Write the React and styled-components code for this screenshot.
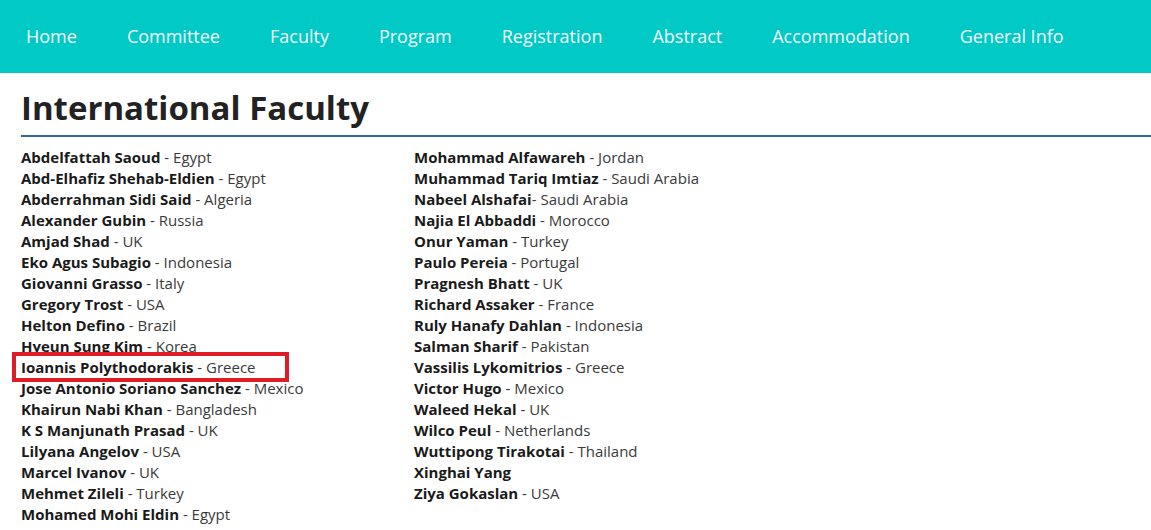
import React from "react";
import styled, { createGlobalStyle } from "styled-components";

const GlobalStyle = createGlobalStyle`
body {
  margin:0;
  background:#fff;
  font-family:"Open Sans", "Liberation Sans", sans-serif;
}
`;

const NavBar = styled.nav`
display:flex;
align-items:center;
height:73px;
background-color:#00c9c6;
padding-left:1px;
`;

const NavLink = styled.a`
padding:0 25px;
font-size:18px;
color:#f4fbfb;
text-decoration:none;
line-height:73px;
`;

const Main = styled.main`
padding:0 0 0 21px;
`;

const Title = styled.h1`
margin:0;
padding-top:15px;
padding-bottom:7px;
font-size:33px;
font-weight:700;
color:#222;
line-height:40px;
border-bottom:2px solid #336699;
`;

const Columns = styled.div`
display:grid;
grid-template-columns:393px 1fr;
padding-top:10px;
`;

const List = styled.ul`
list-style:none;
margin:0;
padding:0;
`;

const Item = styled.li`
position:relative;
font-size:15px;
line-height:21px;
color:#3a3a3a;
white-space:nowrap;
`;

const Name = styled.b`
font-weight:700;
color:#1a1a1a;
`;

// red annotation box drawn over the highlighted row
const Highlight = styled.span`
position:absolute;
left:-9px;
top:-5px;
width:277px;
height:30px;
border:4px solid #dd1c25;
box-sizing:border-box;
pointer-events:none;
`;

const navItems = ["Home", "Committee", "Faculty", "Program", "Registration", "Abstract", "Accommodation", "General Info"];

const left = [
  ["Abdelfattah Saoud", " - Egypt"],
  ["Abd-Elhafiz Shehab-Eldien", " - Egypt"],
  ["Abderrahman Sidi Said", " - Algeria"],
  ["Alexander Gubin", " - Russia"],
  ["Amjad Shad", " - UK"],
  ["Eko Agus Subagio", " - Indonesia"],
  ["Giovanni Grasso", " - Italy"],
  ["Gregory Trost", " - USA"],
  ["Helton Defino", " - Brazil"],
  ["Hyeun Sung Kim", " - Korea"],
  ["Ioannis Polythodorakis", " - Greece", true],
  ["Jose Antonio Soriano Sanchez", " - Mexico"],
  ["Khairun Nabi Khan", " - Bangladesh"],
  ["K S Manjunath Prasad", " - UK"],
  ["Lilyana Angelov", " - USA"],
  ["Marcel Ivanov", " - UK"],
  ["Mehmet Zileli", " - Turkey"],
  ["Mohamed Mohi Eldin", " - Egypt"],
];

const right = [
  ["Mohammad Alfawareh", " - Jordan"],
  ["Muhammad Tariq Imtiaz", " - Saudi Arabia"],
  ["Nabeel Alshafai", "- Saudi Arabia"],
  ["Najia El Abbaddi", " - Morocco"],
  ["Onur Yaman", " - Turkey"],
  ["Paulo Pereia", " - Portugal"],
  ["Pragnesh Bhatt", " - UK"],
  ["Richard Assaker", " - France"],
  ["Ruly Hanafy Dahlan", " - Indonesia"],
  ["Salman Sharif", " - Pakistan"],
  ["Vassilis Lykomitrios", " - Greece"],
  ["Victor Hugo", " - Mexico"],
  ["Waleed Hekal", " - UK"],
  ["Wilco Peul", " - Netherlands"],
  ["Wuttipong Tirakotai", " - Thailand"],
  ["Xinghai Yang", ""],
  ["Ziya Gokaslan", " - USA"],
];

const FacultyList = ({ people }) => (
  <List>
    {people.map(([name, country, marked]) => (
      <Item key={name}>
        <Name>{name}</Name>{country}
        {marked && <Highlight />}
      </Item>
    ))}
  </List>
);

const App = () => {
  return (
    <>
      <GlobalStyle />
      <NavBar>
        {navItems.map((n) => (
          <NavLink key={n} href="#">{n}</NavLink>
        ))}
      </NavBar>
      <Main>
        <Title>International Faculty</Title>
        <Columns>
          <FacultyList people={left} />
          <FacultyList people={right} />
        </Columns>
      </Main>
    </>
  );
};

export default App;
